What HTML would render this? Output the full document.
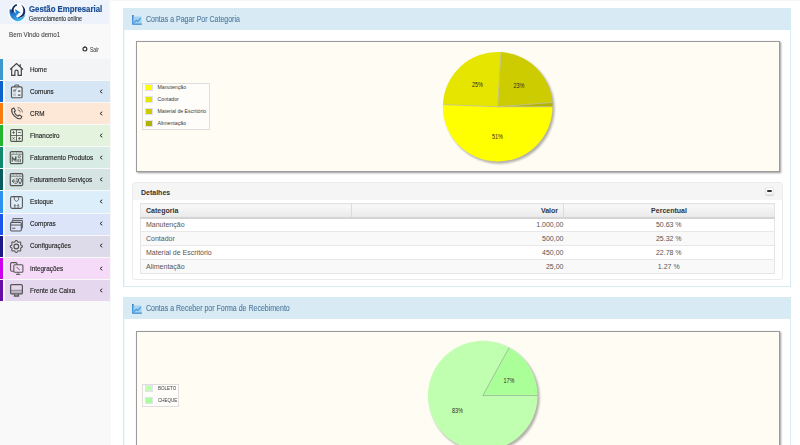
<!DOCTYPE html>
<html><head><meta charset="utf-8">
<style>
*{box-sizing:border-box;margin:0;padding:0}
html,body{width:800px;height:445px;overflow:hidden;background:#fff;font-family:"Liberation Sans",sans-serif}
.abs{position:absolute}
#side{position:absolute;left:0;top:0;width:111px;height:445px;background:#f9f9f9}
#sideline{display:none}
#logo{position:absolute;left:0;top:0;width:109px;height:24px;background:#eef3fb}
.brand{position:absolute;left:29px;top:3.6px;font-weight:bold;font-size:9px;color:#194c92;-webkit-text-stroke:0.2px #194c92;white-space:nowrap;transform:scaleX(0.865);transform-origin:0 0}
.brand2{position:absolute;left:29px;top:15.3px;font-size:6.3px;color:#2e2e2e;-webkit-text-stroke:0.1px #2e2e2e;white-space:nowrap;transform:scaleX(0.86);transform-origin:0 0}
.welcome{position:absolute;left:9px;top:30.3px;font-size:7.4px;color:#444;-webkit-text-stroke:0.1px #444;white-space:nowrap;transform:scaleX(0.845);transform-origin:0 0}
.sair{position:absolute;left:90px;top:45.5px;font-size:6.3px;color:#333;transform:scaleX(0.8);transform-origin:0 0}
.menu{position:absolute;left:0;top:59px;width:110px}
.mi{position:relative;height:22.09px;border-bottom:1px solid #f8f8f8}
.mi .bar{position:absolute;left:0;top:0;width:3.4px;bottom:0}
.mi .bg{position:absolute;left:4.5px;top:0;right:0;bottom:0}
.mi .t{position:absolute;left:30px;top:5.8px;font-size:7.3px;color:#262626;-webkit-text-stroke:0.15px #262626;white-space:nowrap;transform:scaleX(0.87);transform-origin:0 0}
.mi svg.ic{position:absolute;left:9.3px;top:3.1px;width:15px;height:15px}
.mi svg.ch{position:absolute;left:99.3px;top:7.8px;width:4px;height:5px}
.panel{position:absolute;left:123px;width:668px;border:1px solid #d5ecf5;box-shadow:1px 0 0 #eef8fb inset;background:#fff}
.ph{position:absolute;left:0;top:0;right:0;height:21px;background:#d8ebf5}
.ph .t{position:absolute;left:22px;top:5.5px;font-size:8.2px;color:#517ba0;-webkit-text-stroke:0.12px #517ba0;white-space:nowrap;transform:scaleX(0.856);transform-origin:0 0}
.ph svg{position:absolute;left:8px;top:5.5px;width:10px;height:10px}
.chart{position:absolute;background:#fffcf4;border:1px solid #9a9a9a;box-shadow:1px 1px 2px #999}
.legend{position:absolute;border:1px solid #dedede;background:#fefdfa}
.lg{position:absolute;left:2.3px;width:7.8px;height:7px;border:1px solid #e2e2ee}
.lt{position:absolute;left:14.5px;font-size:5.2px;color:#3a3a3a;white-space:nowrap}
.det{position:absolute;left:132px;top:182px;width:651px;height:98px;border:1px solid #ebebeb;border-radius:3px;background:#fff}
.deth{position:absolute;left:0;top:0;right:0;height:17px;background:#f5f5f5;border-radius:3px 3px 0 0}
.deth .t{position:absolute;left:8px;top:6px;font-size:7px;font-weight:bold;color:#333}
.minus{position:absolute;left:632.4px;top:3.5px;width:8.2px;height:8.5px;border:1px solid #e6e6e6;border-radius:2px;background:linear-gradient(#fff,#f3f3f3);box-shadow:0 1px 1px #d4d4d4}
.minus:after{content:"";position:absolute;left:0.8px;top:2.6px;width:4.8px;height:2px;border-radius:1px;background:#333}
table{position:absolute;left:140px;top:203px;width:635px;border-collapse:collapse;border:1px solid #e4e4e4;font-size:7px;color:#555}
th{height:14px;padding-top:1px !important;background:linear-gradient(#f9f9f9,#e9e9e9);border-bottom:2px solid #d4d4d4;font-weight:bold;color:#333;padding:0 5px;border-left:1px solid #dcdcdc}
th:first-child{border-left:none;text-align:left}
td{height:14px;border-top:1px solid #e8e8e8;padding:0 5px}
tr.alt td{background:#f9f9f9}
</style></head><body>
<div id="side"></div>
<div id="sideline"></div><div class="abs" style="left:110px;top:0;width:690px;height:1px;background:#f2f6f9"></div>
<div id="logo"></div>
<svg class="abs" style="left:8px;top:3px" width="20" height="20" viewBox="0 0 20 20">
  <defs><linearGradient id="lgb" x1="0" y1="0" x2="0.6" y2="1"><stop offset="0" stop-color="#1656b0"/><stop offset="0.6" stop-color="#2a8ad6"/><stop offset="1" stop-color="#45bdf0"/></linearGradient></defs>
  <circle cx="10" cy="9.6" r="9.6" fill="#fff" opacity="0.75"/>
  <path d="M1.8 6.3 C0.8 11 3 16.2 8 17.9 C11.8 19.1 15.8 17 17.6 11.3 C15 14.5 11.5 15.6 9 14.6 C7.8 13.8 8.2 11.5 8.7 10.5 L7.9 10.2 C6.5 9.5 5.4 8.5 5.6 7 Z" fill="url(#lgb)"/>
  <path d="M8.8 1.2 C5 1.8 3.1 5.6 4 9.8 L5.6 9.2 C5.1 6.2 6.3 3.6 9.1 2.6 Z" fill="#0c2860"/>
  <path d="M13 1.8 C16.8 3.4 18.1 7.6 16.8 11.1 C15.5 14 12.4 15.3 9.3 14.8 C12.2 13.7 14.6 12 15.2 9 C15.7 6.2 14.9 3.9 13 1.8 Z" fill="#0e2a68"/>
  <path d="M6.9 6 L12.6 9.4 L10.1 10.4 L8.7 13.2 L7.9 10.2 Z" fill="#2284d6"/>
</svg>
<div class="brand">Gestão Empresarial</div>
<div class="brand2">Gerenciamento online</div>
<div class="welcome">Bem Vindo demo1</div>
<svg class="abs" style="left:82px;top:46px" width="6" height="6" viewBox="0 0 6 6"><circle cx="2.9" cy="3.1" r="1.9" stroke="#333" stroke-width="1.2" fill="none"/><path d="M2.9 0.3V1.5" stroke="#333" stroke-width="1"/></svg>
<div class="sair">Sair</div>

<div class="menu">
  <div class="mi"><div class="bar" style="background:#3d98d0"></div><div class="bg" style="background:#f3f4f6"></div>
    <svg class="ic" viewBox="0 0 14 14"><path d="M1 7 L7 1.5 L13 7 M10.5 2 V4.5 M2.5 6 V12.5 H5.5 V9 A1.5 1.5 0 0 1 8.5 9 V12.5 H11.5 V6" stroke="#444" stroke-width="1.1" fill="none"/></svg>
    <div class="t">Home</div></div>
  <div class="mi"><div class="bar" style="background:#0a63cf"></div><div class="bg" style="background:#d7e6f5"></div>
    <svg class="ic" viewBox="0 0 14 14"><rect x="2.3" y="2.6" width="9.9" height="10.2" rx="1.2" stroke="#555" stroke-width="1.1" fill="#e8eef5"/><path d="M5.3 2.6V2a1 1 0 0 1 1-1h2a1 1 0 0 1 1 1v0.6" stroke="#555" stroke-width="1" fill="none"/><rect x="3.8" y="4.8" width="2.8" height="2.8" fill="#b8bcc4"/><rect x="3.8" y="8.6" width="2.8" height="2.8" fill="#c4c8cf"/><path d="M4.1 5.8l1 1 2-2.5" stroke="#666" stroke-width="0.8" fill="none"/><path d="M8.3 6.7h2.4M8.3 10.3h2.4" stroke="#555" stroke-width="1.2"/></svg>
    <div class="t">Comuns</div><svg class="ch" viewBox="0 0 4 5"><path d="M3.3 0.8 L1 2.5 L3.3 4.2" stroke="#333" stroke-width="1" fill="none"/></svg></div>
  <div class="mi"><div class="bar" style="background:#fb7d10"></div><div class="bg" style="background:#fde7d7"></div>
    <svg class="ic" viewBox="0 0 14 14"><path d="M2.5 3 L4.5 1.8 L6 4.5 L4.8 5.5 C5.5 7.5 6.8 8.8 8.5 9.5 L9.5 8.3 L12 9.8 L11 11.8 C7 12.5 2 7.5 2.5 3 Z" stroke="#444" stroke-width="1" fill="none"/><path d="M8 1.5 A4.5 4.5 0 0 1 12.5 6 M8 3.5 A2.5 2.5 0 0 1 10.5 6" stroke="#666" stroke-width="0.8" fill="none"/></svg>
    <div class="t">CRM</div><svg class="ch" viewBox="0 0 4 5"><path d="M3.3 0.8 L1 2.5 L3.3 4.2" stroke="#333" stroke-width="1" fill="none"/></svg></div>
  <div class="mi"><div class="bar" style="background:#21b62c"></div><div class="bg" style="background:#e3f3dd"></div>
    <svg class="ic" viewBox="0 0 14 14"><rect x="1.5" y="1.5" width="11" height="11" rx="1" stroke="#555" stroke-width="1" fill="none"/><path d="M7 1.5V12.5M1.5 7H12.5M3 4.2h2.5M4.2 3v2.5M8.5 4.2h2.5M3.2 8.7l2 2M5.2 8.7l-2 2M8.5 9.7h2.5M9.7 8.5v2.5" stroke="#555" stroke-width="0.8"/></svg>
    <div class="t">Financeiro</div><svg class="ch" viewBox="0 0 4 5"><path d="M3.3 0.8 L1 2.5 L3.3 4.2" stroke="#333" stroke-width="1" fill="none"/></svg></div>
  <div class="mi"><div class="bar" style="background:#0f8a6c"></div><div class="bg" style="background:#d8ece5"></div>
    <svg class="ic" viewBox="0 0 14 14"><rect x="1.2" y="1.5" width="11.6" height="11.2" rx="1.2" stroke="#555" stroke-width="1.1" fill="none"/><path d="M1.5 4H12.5M3.5 2.8h1M6.5 2.8h1M9.5 2.8h1" stroke="#666" stroke-width="0.7" fill="none"/><path d="M3 11V6.5l2 3 1.5-3.5V11M8.5 8.5V11.5M10.5 8.5V11.5" stroke="#555" stroke-width="1" fill="none"/><circle cx="9.6" cy="6.3" r="1.1" stroke="#555" stroke-width="0.8" fill="none"/></svg>
    <div class="t">Faturamento Produtos</div><svg class="ch" viewBox="0 0 4 5"><path d="M3.3 0.8 L1 2.5 L3.3 4.2" stroke="#333" stroke-width="1" fill="none"/></svg></div>
  <div class="mi"><div class="bar" style="background:#0b5c5c"></div><div class="bg" style="background:#d5e3e3"></div>
    <svg class="ic" viewBox="0 0 14 14"><rect x="1.2" y="1.5" width="11.6" height="11.2" rx="1.2" stroke="#555" stroke-width="1.1" fill="none"/><path d="M1.5 4H12.5M3.5 2.8h1M6.5 2.8h1M9.5 2.8h1" stroke="#666" stroke-width="0.7" fill="none"/><path d="M5 6.5L3 8.5 5 10.5M3 8.5h3M6.5 6.5h1.5a1 1 0 0 1 0 2h-1a1 1 0 0 1 0 2h-1.5" stroke="#555" stroke-width="0.9" fill="none"/><path d="M10.3 11.2L9 8.6a1.6 1.6 0 1 1 2.6 0Z" stroke="#555" stroke-width="0.9" fill="none"/></svg>
    <div class="t">Faturamento Serviços</div><svg class="ch" viewBox="0 0 4 5"><path d="M3.3 0.8 L1 2.5 L3.3 4.2" stroke="#333" stroke-width="1" fill="none"/></svg></div>
  <div class="mi"><div class="bar" style="background:#2b93f2"></div><div class="bg" style="background:#ddeefb"></div>
    <svg class="ic" viewBox="0 0 14 14"><rect x="1.5" y="1.5" width="11" height="11" rx="1.5" stroke="#555" stroke-width="1" fill="none"/><path d="M5 1.5v3l2 1.5 2-1.5v-3M5.5 12v-3M8.5 12v-3M4.5 10l1-1 1 1M7.5 10l1-1 1 1" stroke="#555" stroke-width="0.8" fill="none"/></svg>
    <div class="t">Estoque</div><svg class="ch" viewBox="0 0 4 5"><path d="M3.3 0.8 L1 2.5 L3.3 4.2" stroke="#333" stroke-width="1" fill="none"/></svg></div>
  <div class="mi"><div class="bar" style="background:#1a55f0"></div><div class="bg" style="background:#dce4fa"></div>
    <svg class="ic" viewBox="0 0 14 14"><rect x="1.5" y="5" width="10" height="8" rx="1" stroke="#555" stroke-width="1" fill="none"/><path d="M3 5V3.2h9.5v7H11.5M3.5 2.5V1.5h9.5M1.5 7.5h10M3 10.5h3" stroke="#555" stroke-width="0.9" fill="none"/></svg>
    <div class="t">Compras</div><svg class="ch" viewBox="0 0 4 5"><path d="M3.3 0.8 L1 2.5 L3.3 4.2" stroke="#333" stroke-width="1" fill="none"/></svg></div>
  <div class="mi"><div class="bar" style="background:#1c1a88"></div><div class="bg" style="background:#dddbe9"></div>
    <svg class="ic" viewBox="0 0 14 14"><path d="M12.45 7.00 L12.35 7.36 L12.08 7.70 L11.70 7.98 L11.32 8.21 L11.00 8.43 L10.82 8.66 L10.78 8.96 L10.85 9.34 L10.96 9.78 L11.02 10.24 L10.98 10.67 L10.80 11.00 L10.47 11.18 L10.04 11.22 L9.58 11.16 L9.14 11.05 L8.76 10.98 L8.46 11.02 L8.23 11.20 L8.01 11.52 L7.78 11.90 L7.50 12.28 L7.16 12.55 L6.80 12.65 L6.44 12.55 L6.10 12.28 L5.82 11.90 L5.59 11.52 L5.37 11.20 L5.14 11.02 L4.84 10.98 L4.46 11.05 L4.02 11.16 L3.56 11.22 L3.13 11.18 L2.80 11.00 L2.62 10.67 L2.58 10.24 L2.64 9.78 L2.75 9.34 L2.82 8.96 L2.78 8.66 L2.60 8.43 L2.28 8.21 L1.90 7.98 L1.52 7.70 L1.25 7.36 L1.15 7.00 L1.25 6.64 L1.52 6.30 L1.90 6.02 L2.28 5.79 L2.60 5.57 L2.78 5.34 L2.82 5.04 L2.75 4.66 L2.64 4.22 L2.58 3.76 L2.62 3.33 L2.80 3.00 L3.13 2.82 L3.56 2.78 L4.02 2.84 L4.46 2.95 L4.84 3.02 L5.14 2.98 L5.37 2.80 L5.59 2.48 L5.82 2.10 L6.10 1.72 L6.44 1.45 L6.80 1.35 L7.16 1.45 L7.50 1.72 L7.78 2.10 L8.01 2.48 L8.23 2.80 L8.46 2.98 L8.76 3.02 L9.14 2.95 L9.58 2.84 L10.04 2.78 L10.47 2.82 L10.80 3.00 L10.98 3.33 L11.02 3.76 L10.96 4.22 L10.85 4.66 L10.78 5.04 L10.82 5.34 L11.00 5.57 L11.32 5.79 L11.70 6.02 L12.08 6.30 L12.35 6.64Z" stroke="#555" stroke-width="1" fill="none"/><circle cx="6.8" cy="7.0" r="2.2" stroke="#555" stroke-width="1.1" fill="none"/></svg>
    <div class="t">Configurações</div><svg class="ch" viewBox="0 0 4 5"><path d="M3.3 0.8 L1 2.5 L3.3 4.2" stroke="#333" stroke-width="1" fill="none"/></svg></div>
  <div class="mi"><div class="bar" style="background:#cf00ee"></div><div class="bg" style="background:#f5dbf8"></div>
    <svg class="ic" viewBox="0 0 14 14"><rect x="1.5" y="1.5" width="6" height="8" rx="1" stroke="#555" stroke-width="1" fill="none"/><rect x="4.5" y="3.5" width="8.5" height="7" rx="1" stroke="#555" stroke-width="1" fill="#f5dbf8"/><path d="M8.5 10.5v1.5M6.5 12.5h4M7 5.5l3 3" stroke="#555" stroke-width="0.9" fill="none"/></svg>
    <div class="t">Integrações</div><svg class="ch" viewBox="0 0 4 5"><path d="M3.3 0.8 L1 2.5 L3.3 4.2" stroke="#333" stroke-width="1" fill="none"/></svg></div>
  <div class="mi"><div class="bar" style="background:#6a0da6"></div><div class="bg" style="background:#e5d8ee"></div>
    <svg class="ic" viewBox="0 0 14 14"><rect x="1.5" y="7" width="11" height="3" fill="#bcb4c4"/><rect x="1.5" y="1.5" width="11" height="8.7" rx="1.2" stroke="#555" stroke-width="1.1" fill="none"/><path d="M1.5 6.8h11" stroke="#777" stroke-width="0.7" fill="none"/><path d="M5.2 10.2v1.8h3.6v-1.8M4.5 12.3h5" stroke="#555" stroke-width="1" fill="none"/></svg>
    <div class="t">Frente de Caixa</div><svg class="ch" viewBox="0 0 4 5"><path d="M3.3 0.8 L1 2.5 L3.3 4.2" stroke="#333" stroke-width="1" fill="none"/></svg></div>
</div>

<!-- Panel 1 -->
<div class="panel" style="top:8px;height:279px">
  <div class="ph">
    <svg viewBox="0 0 10 10"><rect x="1.2" y="1.5" width="8.3" height="7" fill="#a6d2f0"/><path d="M0.8 0.5 V9.2 H9.8" stroke="#3587cf" stroke-width="1.3" fill="none"/><circle cx="0.9" cy="0.8" r="0.8" fill="#2b6fb5"/><path d="M2.2 7.6 L4.3 5.3 L5.8 6.4 L8.8 3.2" stroke="#3a9be6" stroke-width="1.1" fill="none"/></svg>
    <div class="t">Contas a Pagar Por Categoria</div>
  </div>
</div>
<div class="chart" style="left:136px;top:41px;width:644px;height:131px"></div>
<div class="legend" style="left:142px;top:83px;width:68px;height:47px">
  <div class="lg" style="top:0px;background:#ffff00"></div><div class="lt" style="top:-0.4px">Manutenção</div>
  <div class="lg" style="top:12.1px;background:#e5e500"></div><div class="lt" style="top:11.7px">Contador</div>
  <div class="lg" style="top:24.2px;background:#cccc00"></div><div class="lt" style="top:23.8px">Material de Escritório</div>
  <div class="lg" style="top:36.3px;background:#b2b200"></div><div class="lt" style="top:35.9px">Alimentação</div>
</div>
<svg class="abs" style="left:436px;top:45px" width="130" height="125" viewBox="436 45 130 125">
  <defs><filter id="sh" x="-20%" y="-20%" width="140%" height="140%"><feGaussianBlur stdDeviation="1.2"/></filter></defs>
  <circle cx="499.5" cy="108.8" r="55" fill="#000" opacity="0.3" filter="url(#sh)"/>
  <!-- slices: start 0deg clockwise -->
  <g>
  <path id="p1" d="M497.7 106.8L552.50 106.80A54.8 54.8 0 1 1 442.94 104.62Z" fill="#ffff00"/>
  <path id="p2" d="M497.7 106.8L442.94 104.62A54.8 54.8 0 0 1 500.97 52.10Z" fill="#e5e500"/>
  <path id="p3" d="M497.7 106.8L500.97 52.10A54.8 54.8 0 0 1 552.33 102.45Z" fill="#cccc00"/>
  <path id="p4" d="M497.7 106.8L552.33 102.45A54.8 54.8 0 0 1 552.50 106.80Z" fill="#b2b200"/>
  </g><path id="p5" d="M497.7 106.8L552.50 106.80M497.7 106.8L442.94 104.62M497.7 106.8L500.97 52.10M497.7 106.8L552.33 102.45" stroke="#c4c49a" stroke-width="0.8" fill="none"/>
  <g font-size="6.6" fill="#2a2a2a" text-anchor="middle" font-family="Liberation Sans">
   <text x="497.5" y="139" textLength="11" lengthAdjust="spacingAndGlyphs">51%</text><text x="477.5" y="86.9" textLength="11" lengthAdjust="spacingAndGlyphs">25%</text><text x="519" y="87.8" textLength="11" lengthAdjust="spacingAndGlyphs">23%</text>
  </g>
</svg>

<div class="det">
  <div class="deth"><div class="t">Detalhes</div><div class="minus"></div></div>
</div>
<table>
  <tr><th style="width:211px">Categoria</th><th style="width:212px;text-align:right;padding-right:5px">Valor</th><th style="text-align:center">Percentual</th></tr>
  <tr><td>Manutenção</td><td style="text-align:right;padding-right:0">1.000,00</td><td style="text-align:center">50.63 %</td></tr>
  <tr class="alt"><td>Contador</td><td style="text-align:right;padding-right:0">500,00</td><td style="text-align:center">25.32 %</td></tr>
  <tr><td>Material de Escritório</td><td style="text-align:right;padding-right:0">450,00</td><td style="text-align:center">22.78 %</td></tr>
  <tr class="alt"><td>Alimentação</td><td style="text-align:right;padding-right:0">25,00</td><td style="text-align:center">1.27 %</td></tr>
</table>

<!-- Panel 2 -->
<div class="panel" style="top:297px;height:160px">
  <div class="ph">
    <svg viewBox="0 0 10 10"><rect x="1.2" y="1.5" width="8.3" height="7" fill="#a6d2f0"/><path d="M0.8 0.5 V9.2 H9.8" stroke="#3587cf" stroke-width="1.3" fill="none"/><circle cx="0.9" cy="0.8" r="0.8" fill="#2b6fb5"/><path d="M2.2 7.6 L4.3 5.3 L5.8 6.4 L8.8 3.2" stroke="#3a9be6" stroke-width="1.1" fill="none"/></svg>
    <div class="t">Contas a Receber por Forma de Recebimento</div>
  </div>
</div>
<div class="chart" style="left:136px;top:331px;width:644px;height:131px"></div>
<div class="legend" style="left:142px;top:384px;width:37px;height:23px">
  <div class="lg" style="top:0px;background:#c0ffb0"></div><div class="lt" style="top:0.1px;transform:scaleX(0.87);transform-origin:0 0">BOLETO</div>
  <div class="lg" style="top:11.8px;background:#a8ff98"></div><div class="lt" style="top:11.9px;transform:scaleX(0.87);transform-origin:0 0">CHEQUE</div>
</div>
<svg class="abs" style="left:420px;top:333px" width="130" height="112" viewBox="420 333 130 112">
  <defs><filter id="sh2" x="-20%" y="-20%" width="140%" height="140%"><feGaussianBlur stdDeviation="1.2"/></filter></defs>
  <circle cx="484.6" cy="397.6" r="55" fill="#000" opacity="0.3" filter="url(#sh2)"/>
  <g>
  <path id="q1" d="M482.8 395.6L537.60 395.60A54.8 54.8 0 1 1 509.20 347.58Z" fill="#bfffaf"/>
  <path id="q2" d="M482.8 395.6L509.20 347.58A54.8 54.8 0 0 1 537.60 395.60Z" fill="#aaff99"/>
  </g><path id="q5" d="M482.8 395.6L537.60 395.60M482.8 395.6L509.20 347.58" stroke="#9fb89a" stroke-width="0.8" fill="none"/>
  <g font-size="6.6" fill="#2a2a2a" text-anchor="middle" font-family="Liberation Sans">
   <text x="509" y="383" textLength="11" lengthAdjust="spacingAndGlyphs">17%</text><text x="457.5" y="413" textLength="11" lengthAdjust="spacingAndGlyphs">83%</text>
  </g>
</svg>

</body></html>
